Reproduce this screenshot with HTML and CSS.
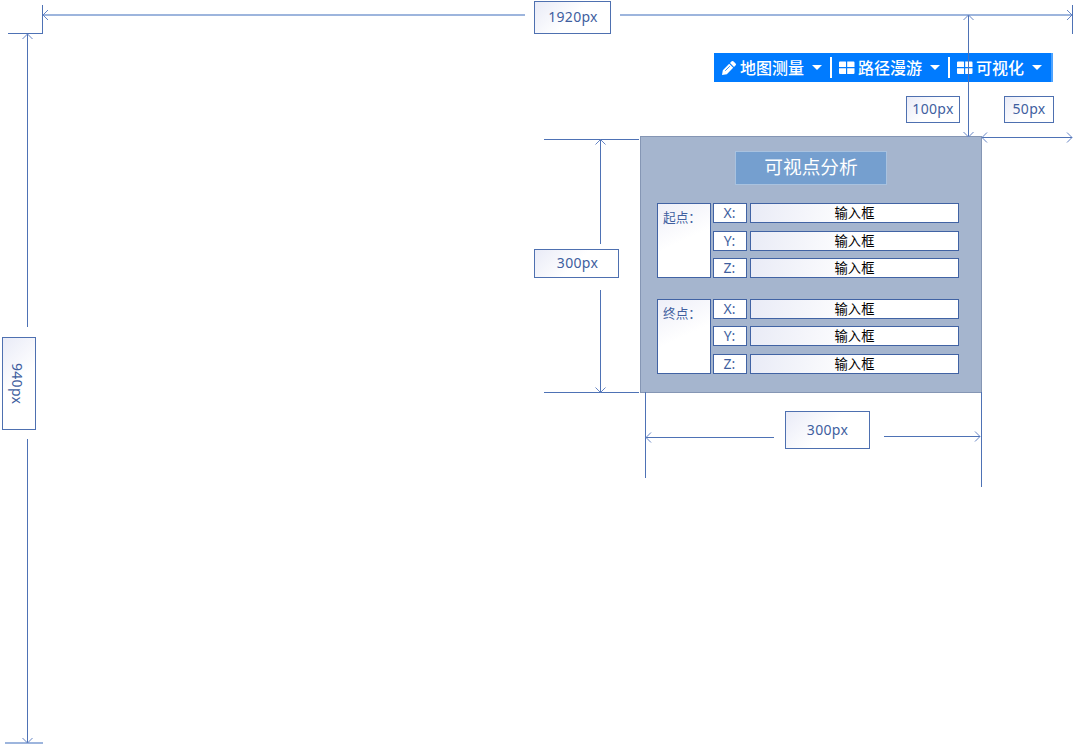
FILE: index.html
```
<!DOCTYPE html>
<html lang="zh">
<head>
<meta charset="utf-8">
<title>可视点分析</title>
<link rel="stylesheet" href="styles.css">
</head>
<body>
<main class="canvas">
  <nav class="toolbar">
    <div class="tool tool-measure">
      <svg class="icon" width="16" height="16" viewBox="0 0 16 16"><path d="M1 15l.8-4.800L8.200 3.800l4 4L5.800 14.200zM9 3l1.700-1.700q1-.8 1.900.1l2 2q.9.9.1 1.900L13 7z" fill="#fff"/><path d="M4.200 10.800l4.600-4.600" stroke="#007bff" stroke-width=".8"/></svg>
      <span>地图测量</span><i class="caret"></i>
    </div>
    <div class="tool tool-roam">
      <svg class="icon" width="17" height="14" viewBox="0 0 17 14"><path d="M2 .5h5.500q.5 0 .5.500v5H1V1.500q0-1 1-1zM9.200.5H15.500q1 0 1 1V6H9.200zM1 7.300h7V13H2q-1 0-1-1zM9.200 7.300h7.300V12q0 1-1 1H9.200z" fill="#fff"/></svg>
      <span>路径漫游</span><i class="caret"></i>
    </div>
    <div class="tool tool-visual">
      <svg class="icon" width="17" height="14" viewBox="0 0 17 14"><path d="M2 .5h5.500q.5 0 .5.500v5H1V1.500q0-1 1-1zM9.200.5H15.500q1 0 1 1V6H9.200zM1 7.300h7V13H2q-1 0-1-1zM9.200 7.300h7.300V12q0 1-1 1H9.200z" fill="#fff"/></svg>
      <span>可视化</span><i class="caret"></i>
    </div>
  </nav>

  <section class="panel">
    <h1 class="title">可视点分析</h1>
    <div class="group">
      <div class="cell point">起点：</div>
      <div class="cell axis">X:</div><div class="cell field">输入框</div>
      <div class="cell axis">Y:</div><div class="cell field">输入框</div>
      <div class="cell axis">Z:</div><div class="cell field">输入框</div>
    </div>
    <div class="group">
      <div class="cell point">终点：</div>
      <div class="cell axis">X:</div><div class="cell field">输入框</div>
      <div class="cell axis">Y:</div><div class="cell field">输入框</div>
      <div class="cell axis">Z:</div><div class="cell field">输入框</div>
    </div>
  </section>

  <svg class="dimensions" width="1074" height="744" viewBox="0 0 1074 744">
    <g class="wide">
      <path d="M43 15H525M620 15H1072M5 743H43"/>
    </g>
    <path d="M42.500 5V34M8 33.500H43M1072.500 5V34"/>
    <path d="M27.500 34V327M27.500 439V743"/>
    <path d="M968.500 15V136M982 137.500H1072"/>
    <path d="M544 139.500H639M544 392.500H639M600.500 140V244M600.500 290V392"/>
    <path d="M645.500 392V478M981.500 392V487M646 437.500H774M884 436.500H980"/>
    <g class="heads">
      <path d="M48 10l-5 5 5 5M1067 10l5 5-5 5M22.500 39l5-5 5 5M22.500 738l5 5 5-5"/>
      <path d="M963.500 20l5-5 5 5M963.500 132l5 5 5-5M987 132.500l-5 5 5 5M1067 132.500l5 5-5 5"/>
      <path d="M595.500 144.500l5-5 5 5M595.500 387.500l5 5 5-5M651 432.500l-5 5 5 5M975 431.500l5 5-5 5"/>
    </g>
  </svg>

  <div class="label page-width">1920px</div>
  <div class="label page-height">940px</div>
  <div class="label top-offset">100px</div>
  <div class="label right-offset">50px</div>
  <div class="label panel-height">300px</div>
  <div class="label panel-width">300px</div>
</main>
</body>
</html>
```
FILE: styles.css
```
* { box-sizing: border-box; }
body { margin: 0; background: #fff; }

.canvas {
  position: relative;
  width: 1074px;
  height: 744px;
  overflow: hidden;
  font-family: "Noto Sans", "Noto Sans CJK SC", sans-serif;
  font-size: 14px;
  color: #3f5f9f;
}

.toolbar {
  position: absolute;
  left: 714px;
  top: 53px;
  width: 339px;
  height: 29px;
  display: flex;
  align-items: center;
  background: #007bff;
  border-right: 2px solid #4da3ff;
  color: #fff;
  font: 500 16px/29px "Noto Sans CJK SC", sans-serif;
}
.tool { display: flex; align-items: center; height: 21px; white-space: nowrap; }
.tool span { margin-left: 3px; }
.tool-measure { width: 118px; padding-left: 7px; border-right: 2px solid #fff; }
.tool-roam { width: 118px; padding-left: 6px; border-right: 2px solid #fff; }
.tool-visual { padding-left: 6px; }
.icon { flex: none; }
.caret {
  margin-left: 8px;
  border: 5px solid transparent;
  border-top-color: #fff;
  border-bottom-width: 0;
}

.panel {
  position: absolute;
  left: 640px;
  top: 136px;
  width: 342px;
  height: 257px;
  padding: 14px 22px 0 16px;
  background: #a5b5ce;
  border: 1px solid #8596b4;
}
.title {
  width: 152px;
  height: 34px;
  margin: 0 0 18.200px 78px;
  border: 1px solid #a9c2df;
  background: #759fcf;
  color: #fff;
  font: 400 18.700px/28px "Noto Sans CJK SC", sans-serif;
  text-align: center;
}
.group {
  display: grid;
  grid-template-columns: 54px 34px 209px;
  grid-template-rows: repeat(3, 20px);
  column-gap: 2.500px;
  row-gap: 7.600px;
  margin-bottom: 20.200px;
}
.cell { border: 1px solid #4163a4; background: #fff; }
.point {
  grid-row: 1 / 4;
  padding: 3px 0 0 5px;
  background: linear-gradient(155deg, #eeeff8, #fff 50%);
  font: 12.700px/19px "Noto Sans CJK SC", sans-serif;
  white-space: nowrap;
}
.axis { margin: 0 1px 0 -1px; text-align: center; line-height: 18px; }
.field {
  background: linear-gradient(100deg, #e9ebf6, #fff 52%);
  color: #000;
  font: 13.300px/17px "Noto Sans CJK SC", sans-serif;
  text-align: center;
}

.dimensions { position: absolute; left: 0; top: 0; fill: none; stroke: #4e72b5; }
.wide { stroke: #9db5dd; stroke-width: 2; }
.heads { stroke: #6685c5; }

.label {
  position: absolute;
  display: flex;
  align-items: center;
  justify-content: center;
  padding-bottom: 2px;
  border: 1px solid #4e70b0;
  background: linear-gradient(135deg, #e9ebf7, #fff 50%);
  letter-spacing: 0.300px;
}
.page-width { left: 534px; top: 1px; width: 77px; height: 33px; padding-left: 1px; }
.page-height { left: 2px; top: 337px; width: 34px; height: 93px; padding: 1px 3px 0 0; writing-mode: vertical-rl; }
.top-offset { left: 906px; top: 96px; width: 54px; height: 27px; }
.right-offset { left: 1004px; top: 96px; width: 50px; height: 27px; }
.panel-height { left: 534px; top: 249px; width: 85px; height: 29px; padding-left: 2px; }
.panel-width { left: 785px; top: 411px; width: 85px; height: 38px; }
```
